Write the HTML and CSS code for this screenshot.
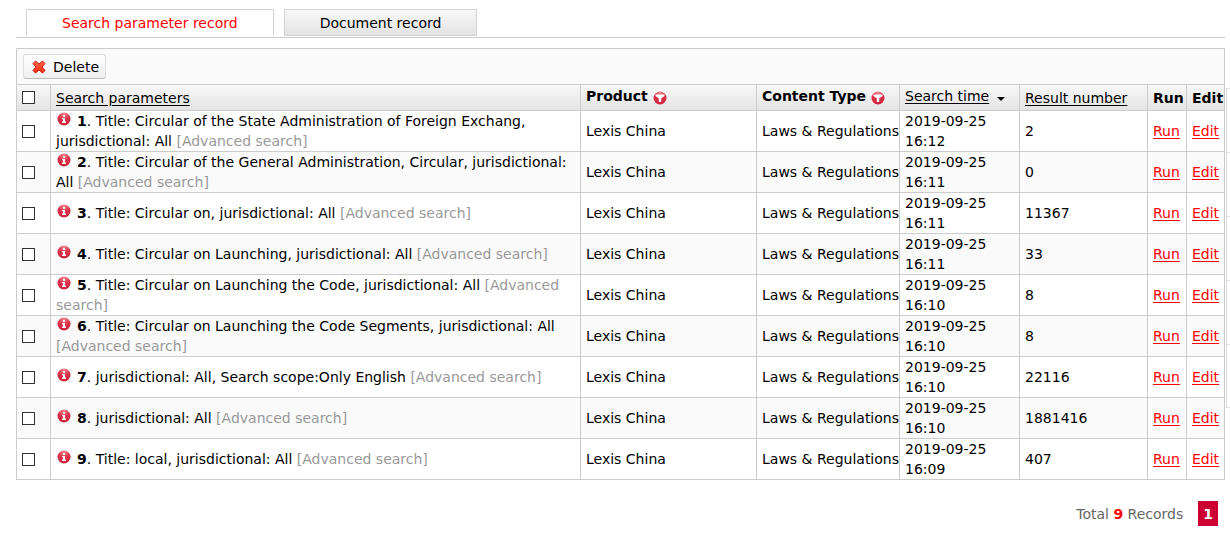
FILE: index.html
```html
<!DOCTYPE html>
<html lang="en">
<head>
<meta charset="utf-8">
<title>Search parameter record</title>
<link rel="stylesheet" href="styles.css">
</head>
<body>
<svg class="defs" width="0" height="0" aria-hidden="true">
  <defs>
    <radialGradient id="ball" cx="50%" cy="10%" r="90%">
      <stop offset="0" stop-color="#f08a92"/>
      <stop offset="0.5" stop-color="#dc3348"/>
      <stop offset="1" stop-color="#cf2039"/>
    </radialGradient>
    <linearGradient id="cross" x1="0" y1="0" x2="0" y2="1">
      <stop offset="0" stop-color="#ff6a4d"/>
      <stop offset="1" stop-color="#f02a12"/>
    </linearGradient>
    <symbol id="info" viewBox="0 0 14 14">
      <circle cx="7" cy="7" r="6.5" fill="url(#ball)"/>
      <path d="M6 3h2v2H6zM5 6h3v3.5h1V11H5V9.5h1V7.3H5z" fill="#fff"/>
    </symbol>
    <symbol id="filter" viewBox="0 0 14 14">
      <circle cx="7" cy="7" r="6.5" fill="url(#ball)"/>
      <path d="M2.500 3.500h9v1.500L8.200 7.300V11H5.800V7.300L2.500 5z" fill="#fff"/>
    </symbol>
  </defs>
</svg>
<div class="page">
  <main class="main">
    <nav class="tabs">
      <a class="tab tab-active" href="#search">Search parameter record</a>
      <a class="tab" href="#document">Document record</a>
    </nav>
    <div class="toolbar">
      <button class="delete" type="button">
        <svg width="14" height="14" viewBox="0 0 14 14" aria-hidden="true"><path d="M3.500 1L7 4 10.500 1 13 3.500 10 7 13 10.500 10.500 13 7 10 3.500 13 1 10.500 4 7 1 3.500z" fill="url(#cross)" stroke="#c8200f" stroke-linejoin="round"/></svg>
        Delete
      </button>
    </div>
    <table class="records">
      <colgroup>
        <col class="c-check"><col><col class="c-product"><col class="c-type"><col class="c-time"><col class="c-result"><col class="c-run"><col class="c-edit">
      </colgroup>
      <thead>
        <tr>
          <th><input type="checkbox" aria-label="Select all"></th>
          <th><a class="sort" href="#params">Search parameters</a></th>
          <th class="high">Product <svg class="filter" aria-hidden="true"><use href="#filter"/></svg></th>
          <th class="high">Content Type <svg class="filter" aria-hidden="true"><use href="#filter"/></svg></th>
          <th class="high"><a class="sort" href="#time">Search time</a><svg class="arrow" width="8" height="4" viewBox="0 0 8 4" aria-hidden="true"><path d="M0 0h8L4 4z"/></svg></th>
          <th><a class="sort" href="#result">Result number</a></th>
          <th>Run</th>
          <th>Edit</th>
        </tr>
      </thead>
      <tbody>
        <tr><td><input type="checkbox" aria-label="Select record 1"></td><td><svg class="info" aria-hidden="true"><use href="#info"/></svg><b>1</b>. Title: Circular of the State Administration of Foreign Exchang, jurisdictional: All <span class="mode">[Advanced search]</span></td><td>Lexis China</td><td class="type">Laws &amp; Regulations</td><td>2019-09-25 16:12</td><td>2</td><td><a class="act" href="#run1">Run</a></td><td><a class="act" href="#edit1">Edit</a></td></tr>
        <tr><td><input type="checkbox" aria-label="Select record 2"></td><td><svg class="info" aria-hidden="true"><use href="#info"/></svg><b>2</b>. Title: Circular of the General Administration, Circular, jurisdictional: All <span class="mode">[Advanced search]</span></td><td>Lexis China</td><td class="type">Laws &amp; Regulations</td><td>2019-09-25 16:11</td><td>0</td><td><a class="act" href="#run2">Run</a></td><td><a class="act" href="#edit2">Edit</a></td></tr>
        <tr><td><input type="checkbox" aria-label="Select record 3"></td><td><svg class="info" aria-hidden="true"><use href="#info"/></svg><b>3</b>. Title: Circular on, jurisdictional: All <span class="mode">[Advanced search]</span></td><td>Lexis China</td><td class="type">Laws &amp; Regulations</td><td>2019-09-25 16:11</td><td>11367</td><td><a class="act" href="#run3">Run</a></td><td><a class="act" href="#edit3">Edit</a></td></tr>
        <tr><td><input type="checkbox" aria-label="Select record 4"></td><td><svg class="info" aria-hidden="true"><use href="#info"/></svg><b>4</b>. Title: Circular on Launching, jurisdictional: All <span class="mode">[Advanced search]</span></td><td>Lexis China</td><td class="type">Laws &amp; Regulations</td><td>2019-09-25 16:11</td><td>33</td><td><a class="act" href="#run4">Run</a></td><td><a class="act" href="#edit4">Edit</a></td></tr>
        <tr><td><input type="checkbox" aria-label="Select record 5"></td><td><svg class="info" aria-hidden="true"><use href="#info"/></svg><b>5</b>. Title: Circular on Launching the Code, jurisdictional: All <span class="mode">[Advanced search]</span></td><td>Lexis China</td><td class="type">Laws &amp; Regulations</td><td>2019-09-25 16:10</td><td>8</td><td><a class="act" href="#run5">Run</a></td><td><a class="act" href="#edit5">Edit</a></td></tr>
        <tr><td><input type="checkbox" aria-label="Select record 6"></td><td><svg class="info" aria-hidden="true"><use href="#info"/></svg><b>6</b>. Title: Circular on Launching the Code Segments, jurisdictional: All <span class="mode">[Advanced search]</span></td><td>Lexis China</td><td class="type">Laws &amp; Regulations</td><td>2019-09-25 16:10</td><td>8</td><td><a class="act" href="#run6">Run</a></td><td><a class="act" href="#edit6">Edit</a></td></tr>
        <tr><td><input type="checkbox" aria-label="Select record 7"></td><td><svg class="info" aria-hidden="true"><use href="#info"/></svg><b>7</b>. jurisdictional: All, Search scope:Only English <span class="mode">[Advanced search]</span></td><td>Lexis China</td><td class="type">Laws &amp; Regulations</td><td>2019-09-25 16:10</td><td>22116</td><td><a class="act" href="#run7">Run</a></td><td><a class="act" href="#edit7">Edit</a></td></tr>
        <tr><td><input type="checkbox" aria-label="Select record 8"></td><td><svg class="info" aria-hidden="true"><use href="#info"/></svg><b>8</b>. jurisdictional: All <span class="mode">[Advanced search]</span></td><td>Lexis China</td><td class="type">Laws &amp; Regulations</td><td>2019-09-25 16:10</td><td>1881416</td><td><a class="act" href="#run8">Run</a></td><td><a class="act" href="#edit8">Edit</a></td></tr>
        <tr><td><input type="checkbox" aria-label="Select record 9"></td><td><svg class="info" aria-hidden="true"><use href="#info"/></svg><b>9</b>. Title: local, jurisdictional: All <span class="mode">[Advanced search]</span></td><td>Lexis China</td><td class="type">Laws &amp; Regulations</td><td>2019-09-25 16:09</td><td>407</td><td><a class="act" href="#run9">Run</a></td><td><a class="act" href="#edit9">Edit</a></td></tr>
      </tbody>
    </table>
    <footer class="pager">
      <span>Total <b class="count">9</b> Records</span>
      <a class="current" href="#page1" aria-current="page">1</a>
    </footer>
  </main>
  <aside class="side"><div></div><div></div><div></div><div></div><div></div></aside>
</div>
</body>
</html>
```
FILE: styles.css
```css
* { box-sizing: border-box; }
body {
  margin: 0;
  background: #fff;
  color: #000;
  font: 14px/20px Verdana, "DejaVu Sans", sans-serif;
}
.defs { display: block; }
.page { display: flex; padding-left: 16px; }
.main { flex: 1; min-width: 0; }

.tabs {
  display: flex;
  gap: 10px;
  padding: 9px 10px 0;
  height: 38px;
  border-bottom: 1px solid #ccc;
}
.tab {
  height: 27px;
  padding: 3px 35px;
  border: 1px solid #d3d3d3;
  background: linear-gradient(#f8f8f8, #e3e3e3);
  color: #000;
  text-decoration: none;
  white-space: nowrap;
}
.tab-active { background: #fff; border-bottom: 0; color: #f00; }

.toolbar {
  margin-top: 10px;
  padding: 5px 6px;
  border: 1px solid #ccc;
  border-bottom: 0;
  background: #fafafa;
}
.delete {
  display: flex;
  align-items: center;
  gap: 7px;
  height: 25px;
  padding: 0 6px 0 8px;
  border: 1px solid #ddd;
  border-bottom-color: #bbb;
  border-radius: 3px;
  background: linear-gradient(#fff, #efefef);
  color: #000;
  font: inherit;
}

.records {
  width: 100%;
  table-layout: fixed;
  border-collapse: collapse;
}
.c-check { width: 34px; }
.c-product { width: 176px; }
.c-type { width: 143px; }
.c-time { width: 120px; }
.c-result { width: 128px; }
.c-run { width: 39px; }
.c-edit { width: 38px; }
th, td {
  padding: 0 5px;
  border: 1px solid #ccc;
  text-align: left;
  vertical-align: middle;
}
th { height: 26px; white-space: nowrap; }
td { height: 41px; }
thead tr { background: linear-gradient(#f8f8f8, #e3e3e3); }
tbody tr:nth-child(even) { background: #fafafa; }
.high { padding-top: 1px; vertical-align: top; }
.type { white-space: nowrap; }
.sort { color: #000; font-weight: normal; }
.act { color: #f00; }
.sort, .act { text-underline-offset: 2px; }
.mode { color: #999; }
input {
  appearance: none;
  display: block;
  width: 13px;
  height: 13px;
  margin: 0;
  border: 1px solid #333;
  background: #fff;
}
.info {
  width: 14px;
  height: 14px;
  margin: 0 6px 0 1px;
  vertical-align: 0;
}
.filter {
  width: 14px;
  height: 14px;
  vertical-align: -4px;
}
.arrow { margin-left: 8px; }

.pager {
  display: flex;
  justify-content: flex-end;
  align-items: center;
  gap: 15px;
  padding: 21px 7px 0 0;
  color: #666;
}
.count { color: #f00; }
.current {
  padding: 3px 5px 2px;
  background: #c03;
  color: #fff;
  font-weight: bold;
  text-decoration: none;
}

.side {
  width: 4px;
  margin: 88px 0 0 1px;
}
.side div {
  height: 64px;
  border: solid #ddd;
  border-width: 1px 0 0 1px;
}
.side div:last-child { border-bottom-width: 1px; }
```
